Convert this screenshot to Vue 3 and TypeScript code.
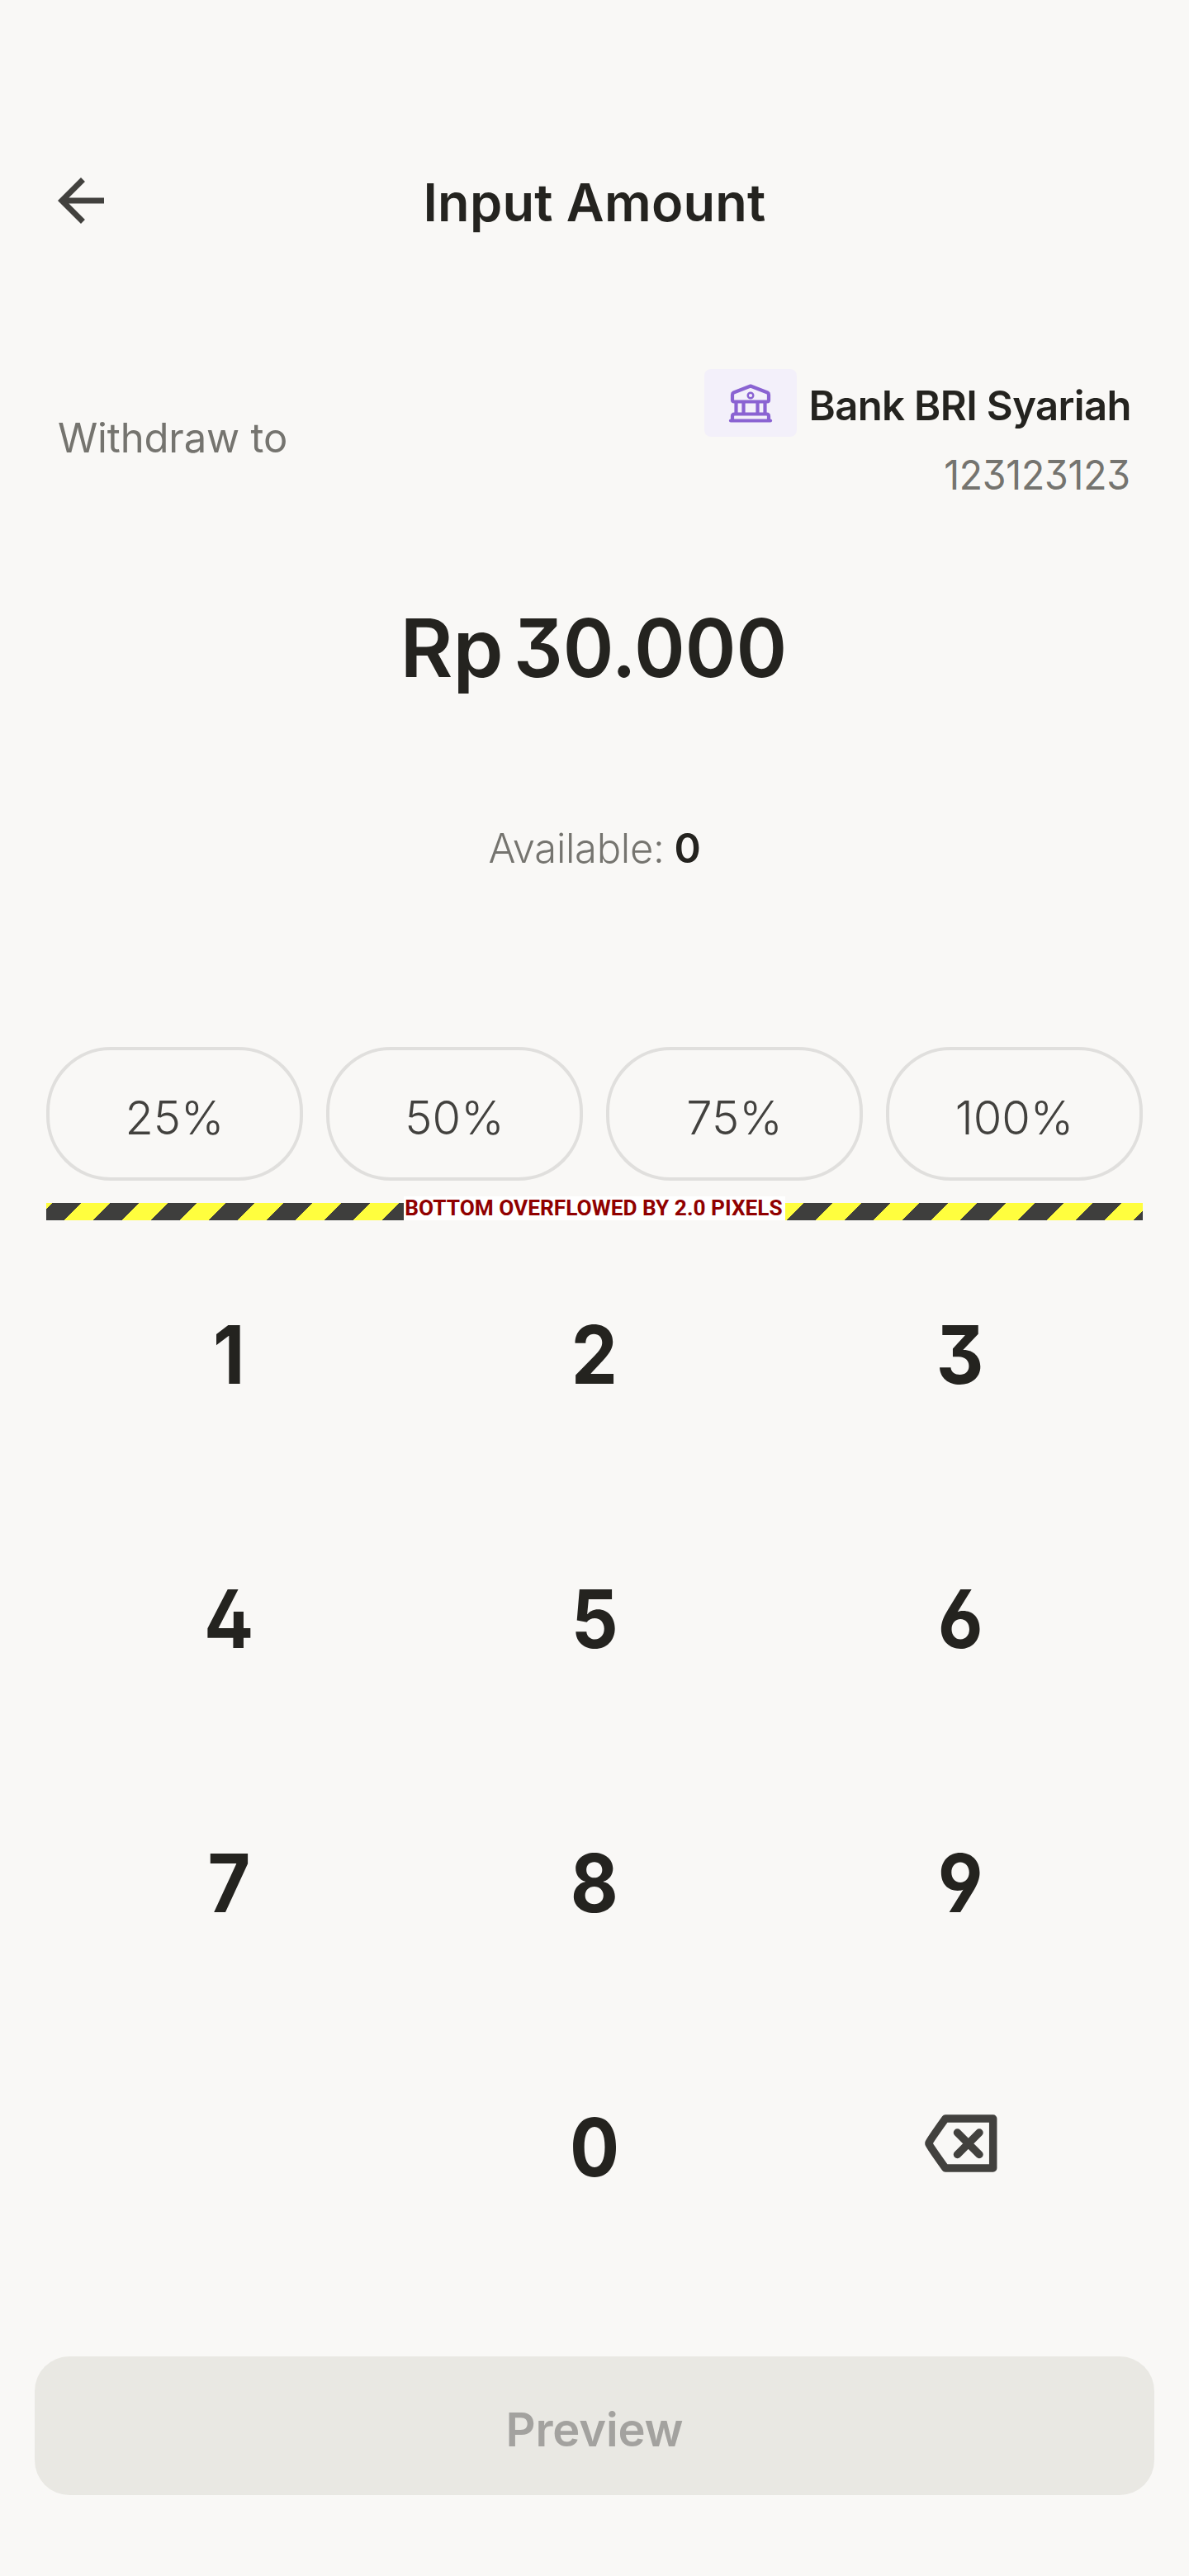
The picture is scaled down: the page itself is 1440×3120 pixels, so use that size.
<script setup lang="ts">
interface Key {
  id: string
  label: string
  kind: 'digit' | 'blank' | 'erase'
}

const bank = { name: 'Bank BRI Syariah', account: '123123123' }
const shares = [25, 50, 75, 100]
const keys: Key[] = [
  ...'123456789'.split('').map((d): Key => ({ id: d, label: d, kind: 'digit' })),
  { id: 'blank', label: '', kind: 'blank' },
  { id: '0', label: '0', kind: 'digit' },
  { id: 'erase', label: '', kind: 'erase' },
]
</script>

<template>
  <main class="screen">
    <header class="bar">
      <button class="back" aria-label="Back">
        <svg width="84" height="84" viewBox="0 0 24 24"><path fill="#42413e" d="M20 11H7.83l5.59-5.59L12 4l-8 8 8 8 1.41-1.41L7.83 13H20z" /></svg>
      </button>
      <h1>Input Amount</h1>
    </header>

    <section class="recipient">
      <span class="hint">Withdraw to</span>
      <div class="account">
        <div class="bank">
          <div class="tile">
            <svg width="54" height="48" viewBox="0 0 54 48" fill="none" stroke="#8a63d2" stroke-width="4.2" stroke-linecap="round" stroke-linejoin="round">
              <path d="M27 3.5 47.5 11.5Q49 12.2 49 14V20.5Q49 22.5 47 22.5H7Q5 22.5 5 20.5V14Q5 12.2 6.5 11.5Z" />
              <circle cx="27" cy="15" r="3.3" stroke-width="2.4" />
              <path d="M9.5 23v14M18.500 23v14M35.5 23v14M44.5 23v14" />
              <path d="M5 45V40Q5 37.5 7.5 37.5H46.5Q49 37.5 49 40V45" />
              <path d="M3 45.5H51" />
            </svg>
          </div>
          <span class="name">{{ bank.name }}</span>
        </div>
        <span class="number">{{ bank.account }}</span>
      </div>
    </section>

    <section class="amount"><span>Rp</span><span class="value">30.000</span></section>
    <p class="available"><span>Available:</span><span class="balance">0</span></p>

    <section class="shares">
      <button v-for="s in shares" :key="s" class="pill"><span>{{ s }}%</span></button>
    </section>

    <div class="overflow"><span>BOTTOM OVERFLOWED BY 2.0 PIXELS</span></div>

    <section class="keypad">
      <button v-for="k in keys" :key="k.id" class="key">
        <span v-if="k.kind === 'digit'">{{ k.label }}</span>
        <svg v-else-if="k.kind === 'erase'" width="88" height="70" viewBox="0 0 88 70" fill="none" stroke="#42413e">
          <path stroke-width="9.5" stroke-linejoin="round" d="M25 5H82.7V65H25Q6 38.5 5 35.5V34.5Q6 31.5 25 5Z" />
          <path stroke-width="9.5" stroke-linecap="round" d="M39.5 22 66 48.5M66 22 39.5 48.5" />
        </svg>
      </button>
    </section>

    <button class="preview"><span>Preview</span></button>
  </main>
</template>

<style>
body {
  background: #f9f8f6;
}
</style>

<style scoped>
.screen {
  box-sizing: border-box;
  width: 1440px;
  height: 3120px;
  padding-top: 189px;
  background: #f9f8f6;
  color: #24231f;
  font-family: Inter, 'Liberation Sans', sans-serif;
  font-feature-settings: 'cv09', 'ss01';
}
button {
  margin: 0;
  padding: 0;
  border: 0;
  background: none;
  color: inherit;
  font: inherit;
  font-feature-settings: inherit;
}
svg {
  display: block;
}
.bar {
  display: grid;
  grid-template-columns: 84px 1fr 84px;
  height: 112px;
  padding: 0 56px;
  align-items: center;
}
.back {
  margin-top: -4px;
}
h1 {
  margin: 0;
  text-align: center;
  font-size: 63px;
  font-weight: 600;
  line-height: 112px;
  letter-spacing: 0.24px;
}
.recipient {
  display: flex;
  justify-content: space-between;
  align-items: flex-start;
  height: 167px;
  margin-top: 146px;
  padding: 0 70px;
  font-size: 49px;
}
.hint {
  line-height: 167px;
  letter-spacing: -0.16px;
  color: #75746f;
}
.account {
  display: flex;
  flex-direction: column;
  align-items: flex-end;
}
.bank {
  display: flex;
  height: 82px;
}
.tile {
  display: flex;
  align-items: center;
  justify-content: center;
  width: 112px;
  height: 82px;
  margin-right: 14px;
  border-radius: 8px;
  background: #f3f0fa;
}
.name {
  line-height: 89px;
  font-weight: 600;
  letter-spacing: -0.6px;
}
.number {
  margin-right: 1px;
  line-height: 93px;
  letter-spacing: -0.2px;
  transform: scaleX(0.945);
  transform-origin: right;
  color: #75746f;
}
.amount {
  display: flex;
  justify-content: center;
  gap: 12px;
  height: 120px;
  margin-top: 111px;
  font-size: 98px;
  font-weight: 600;
  line-height: 120px;
}
.value {
  width: 334px;
  transform: scaleX(0.955);
  transform-origin: left;
}
.available {
  display: flex;
  justify-content: center;
  gap: 12px;
  height: 70px;
  margin: 147px 0 0;
  font-size: 49px;
  font-weight: 300;
  line-height: 71px;
  letter-spacing: -0.34px;
  color: #75746f;
}
.balance {
  font-weight: 600;
  color: #24231f;
}
.shares {
  display: grid;
  grid-template-columns: repeat(4, 1fr);
  gap: 28px;
  margin-top: 206px;
  padding: 0 56px;
}
.pill {
  box-sizing: border-box;
  height: 162px;
  padding-top: 10px;
  border: 4px solid #e0dfdd;
  border-radius: 78px;
  font-size: 56px;
  font-weight: 300;
  color: #42413e;
}
.overflow {
  display: flex;
  justify-content: center;
  height: 21px;
  margin: 27px 56px 0;
  background: repeating-linear-gradient(135deg, #fffe3e 0 5.3px, #3e3e3d 5.3px 30.05px, #fffe3e 30.05px 49.497px);
}
.overflow span {
  height: 29px;
  margin-top: -8px;
  padding: 0 3px 0 1px;
  background: #fff;
  color: #900000;
  font: 700 26.25px/29px Roboto, sans-serif;
  white-space: nowrap;
}
.keypad {
  display: grid;
  grid-template-columns: repeat(3, 1fr);
  grid-auto-rows: 320px;
  padding: 2px 56px 0;
}
.key {
  display: flex;
  align-items: center;
  justify-content: center;
  font-size: 98px;
  font-weight: 700;
}
.key span {
  transform: scaleX(0.91);
}
.key svg {
  margin: -8px 0 0 3px;
}
.preview {
  display: block;
  width: 1356px;
  height: 168px;
  margin: 94px auto 0;
  padding-top: 10px;
  border-radius: 42px;
  background: #e9e8e3;
  color: #a3a29f;
  font-size: 56px;
  font-weight: 600;
  letter-spacing: -0.16px;
}
</style>
